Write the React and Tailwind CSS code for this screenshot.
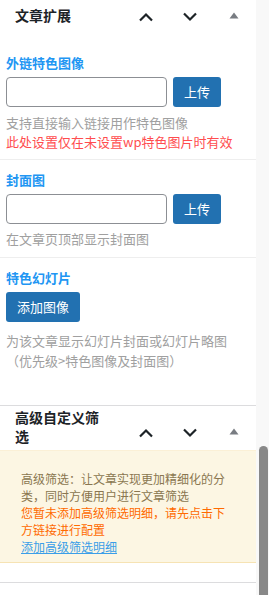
import React from "react";

const font = { fontFamily: '"Noto Sans CJK SC", "Noto Sans", sans-serif' };

function Up() {
  return (
    <svg width="16" height="10" viewBox="0 0 16 10" fill="none">
      <path d="M2 8.5 L8 2.5 L14 8.5" stroke="#1d2327" strokeWidth="2.2" />
    </svg>
  );
}
function Down() {
  return (
    <svg width="16" height="10" viewBox="0 0 16 10" fill="none">
      <path d="M2 1.5 L8 7.5 L14 1.5" stroke="#1d2327" strokeWidth="2.2" />
    </svg>
  );
}
function Tri() {
  return (
    <svg width="10" height="7" viewBox="0 0 10 7">
      <path d="M5 0.5 L9.5 6.5 L0.5 6.5 Z" fill="#787c82" />
    </svg>
  );
}

function Controls({ className = "" }) {
  return (
    <div className={"flex ml-auto " + className}>
      <div className="w-[44px] flex justify-center"><Up /></div>
      <div className="w-[44px] flex justify-center"><Down /></div>
      <div className="w-[44px] flex justify-center"><Tri /></div>
    </div>
  );
}

function InputRow() {
  return (
    <div className="flex items-center mt-[4px] h-[30px]">
      <div className="w-[161px] h-[30px] border border-[#8c8f94] rounded-[4px] bg-white" />
      <div className="ml-[6px] w-[48px] h-[30px] rounded-[3px] bg-[#2271b1] text-white text-[13px] flex items-center justify-center">上传</div>
    </div>
  );
}

export default function App() {
  return (
    <div className="flex w-[269px] h-[595px] overflow-hidden bg-white" style={font}>
      <div className="w-[256px] flex flex-col">
        {/* header 1 */}
        <div className="h-[32px] flex items-center">
          <div className="pl-[15px] text-[14px] font-bold text-[#1d2327] leading-[19px] -mt-[1px]">文章扩展</div>
          <Controls className="mt-[1px]" />
        </div>
        {/* section 1 */}
        <div className="pt-[21px] pb-[8px] pl-[6px] border-b border-[#eeeeee]">
          <div className="text-[13px] font-bold text-[#2196f3] leading-[20px]">外链特色图像</div>
          <InputRow />
          <div className="mt-[6px] text-[13px] leading-[19px] text-[#a0a0a0]">支持直接输入链接用作特色图像</div>
          <div className="text-[13px] leading-[19px] text-[#ff4d4f]">此处设置仅在未设置wp特色图片时有效</div>
        </div>
        {/* section 2 */}
        <div className="pt-[10px] pb-[9px] pl-[6px] border-b border-[#eeeeee]">
          <div className="text-[13px] font-bold text-[#2196f3] leading-[20px]">封面图</div>
          <InputRow />
          <div className="mt-[5px] text-[13px] leading-[19px] text-[#a0a0a0]">在文章页顶部显示封面图</div>
        </div>
        {/* section 3 */}
        <div className="pt-[10px] pb-[34px] pl-[6px] border-b border-[#dcdcde]">
          <div className="text-[13px] font-bold text-[#2196f3] leading-[20px]">特色幻灯片</div>
          <div className="mt-[4px] w-[74px] h-[30px] rounded-[3px] bg-[#2271b1] text-white text-[13px] flex items-center justify-center">添加图像</div>
          <div className="mt-[9px] text-[13px] leading-[20px] text-[#a0a0a0]">
            为该文章显示幻灯片封面或幻灯片略图
            <br />
            （优先级&gt;特色图像及封面图）
          </div>
        </div>
        {/* header 2 */}
        <div className="h-[44px] flex items-center">
          <div className="pl-[15px] w-[105px] text-[14px] font-bold text-[#1d2327] leading-[19px] -mt-[2px]">
            高级自定义筛
            <br />
            选
          </div>
          <Controls className="mt-[9px]" />
        </div>
        {/* notice box */}
        <div className="bg-[#fcf6e3] border-t border-[#fbf0d6] border-b border-b-[#f6e3b4] pt-[19px] pb-[7px] pl-[21px] text-[12px] leading-[17px]">
          <div className="text-[#8a7650]">
            高级筛选：让文章实现更加精细化的分
            <br />
            类，同时方便用户进行文章筛选
          </div>
          <div className="text-[#ff6a00]">
            您暂未添加高级筛选明细，请先点击下
            <br />
            方链接进行配置
          </div>
          <div className="text-[#3a9ee8] underline">添加高级筛选明细</div>
        </div>
        <div className="h-[19px]" />
        <div className="border-t border-[#dcdcde] flex-1" />
      </div>
      {/* scrollbar */}
      <div className="w-[13px] h-full bg-[#f8f8f8] flex flex-col">
        <div className="h-[446px]" />
        <div className="ml-[3px] w-[9px] flex-1 rounded-t-[5px] bg-[#888888]" />
      </div>
    </div>
  );
}
